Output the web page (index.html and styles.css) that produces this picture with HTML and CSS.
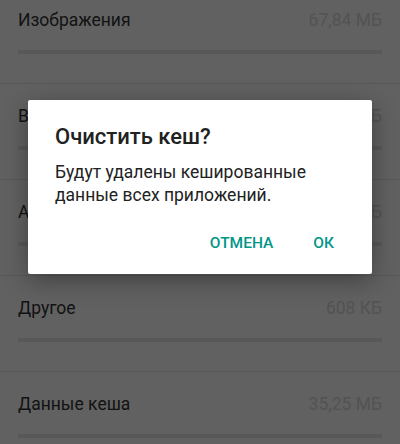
FILE: index.html
```html
<!DOCTYPE html>
<html lang="ru">
<head>
    <meta charset="UTF-8">
    <meta name="viewport" content="width=device-width, initial-scale=1.0">
    <title>Хранилище</title>
    <link rel="stylesheet" href="styles.css">
</head>
<body>
    <div class="list">
        <div class="row">
            <div class="row_head"><span class="name">Изображения</span><span class="size">67,84 МБ</span></div>
            <div class="bar"></div>
        </div>
        <div class="row">
            <div class="row_head"><span class="name">Видео</span><span class="size">0 Б</span></div>
            <div class="bar"></div>
        </div>
        <div class="row">
            <div class="row_head"><span class="name">Аудио</span><span class="size">0 Б</span></div>
            <div class="bar"></div>
        </div>
        <div class="row">
            <div class="row_head"><span class="name">Другое</span><span class="size">608 КБ</span></div>
            <div class="bar"></div>
        </div>
        <div class="row">
            <div class="row_head"><span class="name">Данные кеша</span><span class="size">35,25 МБ</span></div>
            <div class="bar"></div>
        </div>
    </div>

    <div class="scrim"></div>

    <div class="dialog">
        <h2>Очистить кеш?</h2>
        <p>Будут удалены кешированные данные всех приложений.</p>
        <div class="actions">
            <button type="button">Отмена</button>
            <button type="button">ОК</button>
        </div>
    </div>
</body>
</html>
```

FILE: styles.css
```css
html {
    height: 444px;
    overflow: hidden;
}
body {
    font-family: Roboto, "Noto Sans", sans-serif;
    background: #ffffff;
    margin: 0;
    height: 444px;
    overflow: hidden;
    position: relative;
}
.list {
    margin-top: -12px;
    height: 456px;
    overflow: hidden;
}
.row {
    height: 95px;
    border-bottom: 1px solid #e4e4e4;
    padding: 0 18px;
}
.row_head {
    display: flex;
    justify-content: space-between;
    align-items: center;
    padding-top: 20px;
    height: 24px;
    font-size: 17.5px;
}
.name {
    color: #333;
}
.size {
    color: #d9d9d9;
}
.bar {
    margin-top: 18px;
    height: 4px;
    background: #e6e6e6;
}
.scrim {
    position: absolute;
    inset: 0;
    background: rgba(0, 0, 0, 0.62);
}
.dialog {
    position: absolute;
    left: 28px;
    top: 100px;
    width: 344px;
    height: 174px;
    box-sizing: border-box;
    padding: 23px 27px 0;
    background: #fff;
    border-radius: 2px;
    box-shadow: 0 6px 24px rgba(0, 0, 0, 0.35);
}
h2 {
    margin: 0;
    font-size: 22px;
    font-weight: 500;
    line-height: 28px;
    color: #212121;
}
p {
    margin: 10px 0 0;
    font-size: 17.5px;
    line-height: 23px;
    color: #222;
}
.actions {
    display: flex;
    justify-content: flex-end;
    gap: 40px;
    margin-top: 28px;
    padding-right: 11px;
}
button {
    background: none;
    border: none;
    padding: 0;
    font-family: inherit;
    font-size: 15.5px;
    line-height: 17px;
    font-weight: 500;
    text-transform: uppercase;
    color: #009688;
    cursor: pointer;
}
```
